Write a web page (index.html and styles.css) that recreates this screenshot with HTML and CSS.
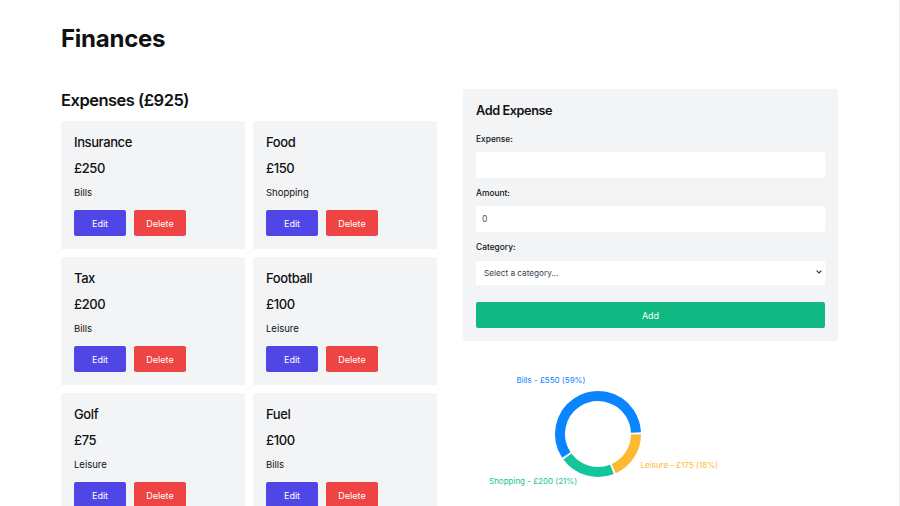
FILE: index.html
```html
<!DOCTYPE html>
<html lang="en">
<head>
<meta charset="utf-8">
<title>Finances</title>
<link rel="stylesheet" href="styles.css">
</head>
<body>
<div class="page">
  <h1 class="title">Finances</h1>
  <div class="columns">
    <section class="expenses">
      <h2 class="section-title">Expenses (£925)</h2>
      <div class="grid">
        <div class="card">
          <div class="card-name">Insurance</div>
          <div class="card-price">£250</div>
          <div class="card-cat">Bills</div>
          <div class="actions"><button class="btn edit">Edit</button><button class="btn delete">Delete</button></div>
        </div>
        <div class="card">
          <div class="card-name">Food</div>
          <div class="card-price">£150</div>
          <div class="card-cat">Shopping</div>
          <div class="actions"><button class="btn edit">Edit</button><button class="btn delete">Delete</button></div>
        </div>
        <div class="card">
          <div class="card-name">Tax</div>
          <div class="card-price">£200</div>
          <div class="card-cat">Bills</div>
          <div class="actions"><button class="btn edit">Edit</button><button class="btn delete">Delete</button></div>
        </div>
        <div class="card">
          <div class="card-name">Football</div>
          <div class="card-price">£100</div>
          <div class="card-cat">Leisure</div>
          <div class="actions"><button class="btn edit">Edit</button><button class="btn delete">Delete</button></div>
        </div>
        <div class="card">
          <div class="card-name">Golf</div>
          <div class="card-price">£75</div>
          <div class="card-cat">Leisure</div>
          <div class="actions"><button class="btn edit">Edit</button><button class="btn delete">Delete</button></div>
        </div>
        <div class="card">
          <div class="card-name">Fuel</div>
          <div class="card-price">£100</div>
          <div class="card-cat">Bills</div>
          <div class="actions"><button class="btn edit">Edit</button><button class="btn delete">Delete</button></div>
        </div>
      </div>
    </section>
    <aside class="side">
      <form class="form-box">
        <h3 class="form-title">Add Expense</h3>
        <label class="label">Expense:</label>
        <input class="field" type="text" value="">
        <label class="label">Amount:</label>
        <input class="field" type="text" value="0">
        <label class="label">Category:</label>
        <div class="select-wrap">
          <select class="field select">
            <option>Select a category...</option>
          </select>
          <svg class="chevron" width="6" height="4" viewBox="0 0 6 4"><path d="M0.6 0.6 L3 3 L5.4 0.6" fill="none" stroke="#333" stroke-width="1.1"/></svg>
        </div>
        <button class="add-btn" type="button">Add</button>
      </form>
      <svg class="chart" width="375" height="160" viewBox="0 0 375 160">
        <circle cx="135" cy="83" r="38" fill="none" stroke="#0a84ff" stroke-width="10" stroke-dasharray="139.9 300" transform="rotate(146.5 135 83)"/>
        <circle cx="135" cy="83" r="38" fill="none" stroke="#fdb92f" stroke-width="10" stroke-dasharray="43.1 300" transform="rotate(0.5 135 83)"/>
        <circle cx="135" cy="83" r="38" fill="none" stroke="#14c49b" stroke-width="10" stroke-dasharray="49.7 300" transform="rotate(68.5 135 83)"/>
        <text x="53.5" y="31.5" class="lbl" fill="#0a84ff">Bills - £550 (59%)</text>
        <text x="177.5" y="117" class="lbl" fill="#fdb92f">Leisure - £175 (18%)</text>
        <text x="26" y="133" class="lbl" fill="#14c49b">Shopping - £200 (21%)</text>
      </svg>
    </aside>
  </div>
</div>
</body>
</html>
```

FILE: styles.css
```css
html, body {
  margin: 0;
  padding: 0;
}
body {
  font-family: Inter, "Noto Sans", "Liberation Sans", sans-serif;
  color: #111;
  background: #fff;
  min-height: 100vh;
  box-sizing: border-box;
  border-right: 1px solid #ececec;
}
.page {
  width: 777px;
  margin-left: 61px;
}
.title {
  margin: 24px 0 0;
  font-size: 24px;
  line-height: 29px;
  font-weight: 700;
  letter-spacing: -0.25px;
}
.columns {
  display: grid;
  grid-template-columns: 376px 375px;
  column-gap: 26px;
  margin-top: 36px;
  align-items: start;
}
.section-title {
  margin: 0 0 10px;
  font-size: 16.5px;
  line-height: 22px;
  font-weight: 600;
  letter-spacing: -0.5px;
}
.grid {
  display: grid;
  grid-template-columns: 184px 184px;
  gap: 8px;
}
.card {
  background: #f3f4f6;
  padding: 13px;
  height: 128px;
  box-sizing: border-box;
}
.card-name {
  font-size: 13px;
  line-height: 17px;
  font-weight: 500;
  letter-spacing: -0.4px;
}
.card-price {
  margin-top: 9px;
  font-size: 13px;
  line-height: 17px;
  font-weight: 500;
  letter-spacing: -0.4px;
}
.card-cat {
  margin-top: 10px;
  font-size: 9.5px;
  line-height: 12px;
}
.actions {
  margin-top: 11px;
  display: flex;
  gap: 8px;
}
.btn {
  width: 52px;
  height: 26px;
  border: 0;
  border-radius: 2px;
  color: #fff;
  font-family: inherit;
  font-size: 9px;
  padding: 0;
}
.edit { background: #4f46e5; }
.delete { background: #ef4444; }

.side {
  display: flex;
  flex-direction: column;
}
.form-box {
  background: #f3f4f6;
  border-radius: 3px;
  padding: 13px;
  display: flex;
  flex-direction: column;
  margin: 0;
}
.form-title {
  margin: 0 0 14.5px;
  font-size: 12.7px;
  line-height: 17px;
  font-weight: 600;
  letter-spacing: -0.4px;
}
.label {
  font-size: 8.4px;
  line-height: 11px;
  font-weight: 500;
  margin-bottom: 7px;
}
.field {
  height: 26px;
  box-sizing: border-box;
  border: 0;
  border-radius: 1px;
  background: #fff;
  font-family: inherit;
  font-size: 8.5px;
  color: #4b5563;
  padding: 0 6px;
  margin: 0 0 10px;
  width: 100%;
  outline: none;
}
.select-wrap {
  position: relative;
}
.select {
  -webkit-appearance: none;
  appearance: none;
  height: 24px;
  padding: 0 8px;
  font-size: 8.2px;
  color: #374151;
  margin: 0;
}
.chevron {
  position: absolute;
  right: 3px;
  top: 10px;
}
.add-btn {
  margin-top: 17.5px;
  height: 26px;
  border: 0;
  border-radius: 2px;
  background: #10b981;
  color: #fff;
  font-family: inherit;
  font-size: 9px;
}
.chart {
  display: block;
  margin-top: 10px;
}
.lbl {
  font-family: Inter, "Noto Sans", sans-serif;
  font-size: 8px;
}
```
